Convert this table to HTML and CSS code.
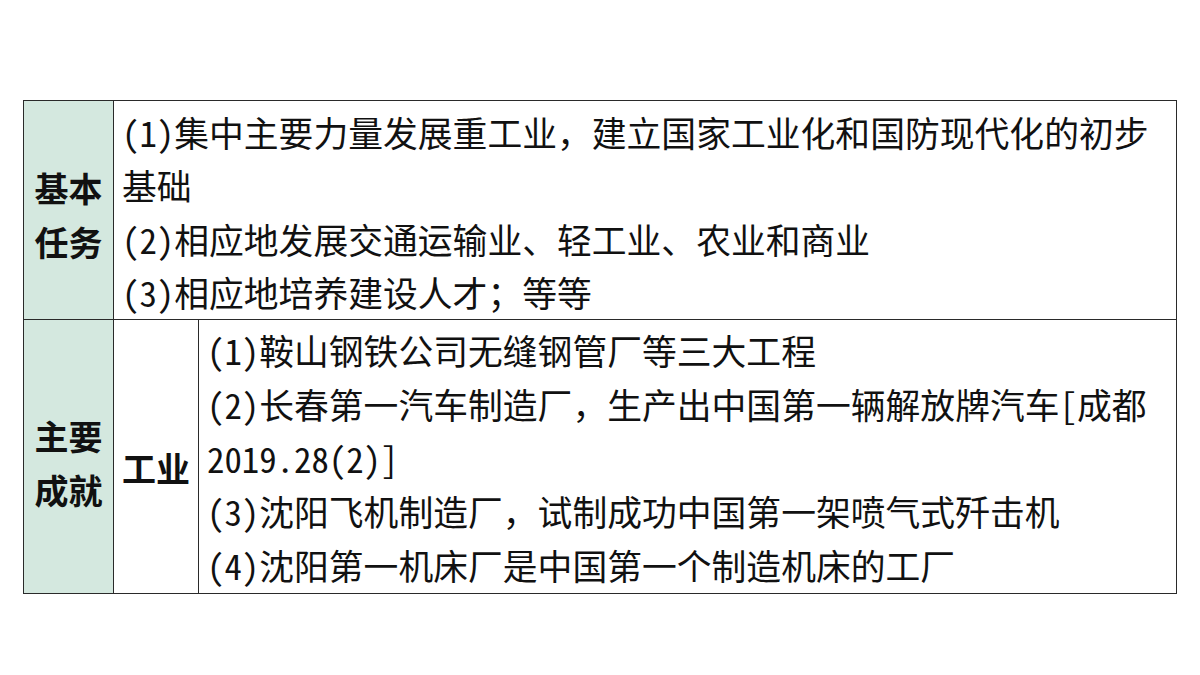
FILE: index.html
```html
<!DOCTYPE html>
<html lang="zh-CN">
<head>
<meta charset="utf-8">
<link rel="stylesheet" href="styles.css">
</head>
<body>
<div class="page">
<table class="grid">
  <colgroup>
    <col class="c1"><col class="c2"><col class="c3">
  </colgroup>
  <tr class="r1">
    <td class="label top"><div>基本</div><div>任务</div></td>
    <td class="content first" colspan="2">
      <div class="ln"><span class="hw">(1)</span>集中主要力量发展重工业，建立国家工业化和国防现代化的初步</div>
      <div class="ln">基础</div>
      <div class="ln"><span class="hw">(2)</span>相应地发展交通运输业、轻工业、农业和商业</div>
      <div class="ln"><span class="hw">(3)</span>相应地培养建设人才；等等</div>
    </td>
  </tr>
  <tr class="r2">
    <td class="label low"><div>主要</div><div>成就</div></td>
    <td class="sub">工业</td>
    <td class="content second">
      <div class="ln"><span class="hw">(1)</span>鞍山钢铁公司无缝钢管厂等三大工程</div>
      <div class="ln"><span class="hw">(2)</span>长春第一汽车制造厂，生产出中国第一辆解放牌汽车<span class="hw">[</span>成都</div>
      <div class="ln"><span class="hw">2019.28(2)]</span></div>
      <div class="ln"><span class="hw">(3)</span>沈阳飞机制造厂，试制成功中国第一架喷气式歼击机</div>
      <div class="ln"><span class="hw">(4)</span>沈阳第一机床厂是中国第一个制造机床的工厂</div>
    </td>
  </tr>
</table>
</div>
</body>
</html>
```

FILE: styles.css
```css
html, body {
  margin: 0;
  padding: 0;
  background: #ffffff;
}
.page {
  padding: 100px 0 0 23px;
  font-family: "Noto Sans CJK SC", sans-serif;
  color: #111111;
}
.hw {
  font-feature-settings: "hwid" 1;
}
.grid {
  border-collapse: collapse;
  width: 1154px;
  table-layout: fixed;
}
.c1 { width: 90px; }
.c2 { width: 85px; }
.grid td {
  border: 1.5px solid #2a2a2a;
  padding: 0;
  vertical-align: middle;
}
.label {
  background: #d4e8df;
  text-align: center;
  font-weight: 700;
  font-size: 34px;
  line-height: 54px;
}
.grid td.label.top { padding-top: 10px; }
.grid td.label.low { padding-top: 14px; }
.grid td.sub {
  text-align: center;
  font-weight: 700;
  font-size: 34px;
  line-height: 54px;
  padding-top: 24px;
}
.grid td.content {
  padding-left: 8px;
  font-size: 34.8px;
  vertical-align: top;
}
.grid td.content.first { padding-top: 5px; }
.grid td.content.first .ln { height: 53.25px; line-height: 53.25px; }
.grid td.content.second { padding-top: 4px; }
.grid td.content.second .ln { height: 53.8px; line-height: 53.8px; }
.ln {
  white-space: nowrap;
}
```
